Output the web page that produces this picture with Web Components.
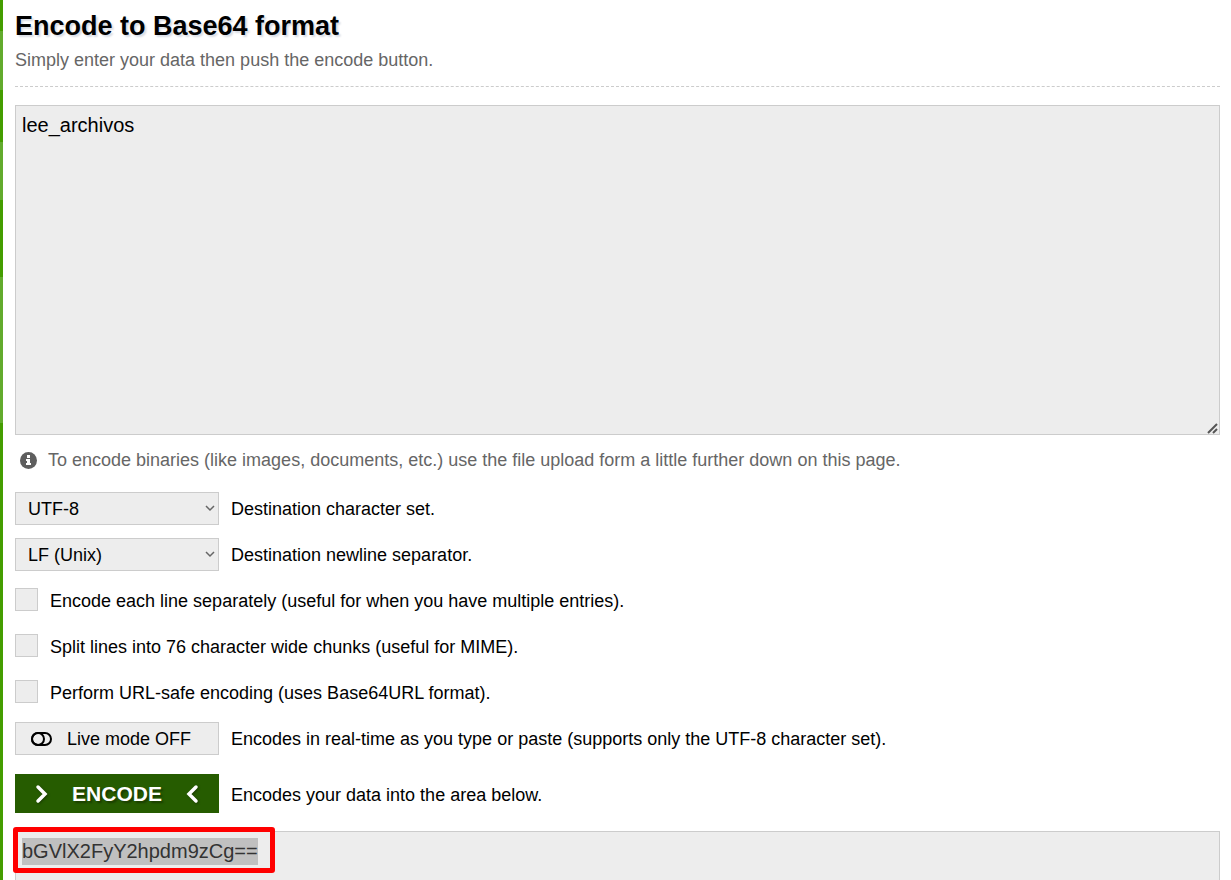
<!DOCTYPE html>
<html lang="en">
<head>
<meta charset="utf-8">
<title>Base64 Encode</title>
<style>
  html, body { margin: 0; height: 100%; }
  body {
    background: #fff;
    color: #000;
    font: 18px/24px "Liberation Sans", Arial, sans-serif;
    overflow: hidden;
  }
</style>
</head>
<body>
<page-shell>
  <page-heading>
    <span slot="title">Encode to Base64 format</span>
    <span slot="lead">Simply enter your data then push the encode button.</span>
  </page-heading>
  <source-box value="lee_archivos" label="Data to encode"></source-box>
  <info-note>To encode binaries (like images, documents, etc.) use the file upload form a little further down on this page.</info-note>
  <option-list>
    <select-row options="UTF-8|ASCII|ISO-8859-1|UTF-16">Destination character set.</select-row>
    <select-row options="LF (Unix)|CRLF (Windows)">Destination newline separator.</select-row>
    <check-row>Encode each line separately (useful for when you have multiple entries).</check-row>
    <check-row>Split lines into 76 character wide chunks (useful for MIME).</check-row>
    <check-row>Perform URL-safe encoding (uses Base64URL format).</check-row>
    <live-row>Encodes in real-time as you type or paste (supports only the UTF-8 character set).</live-row>
    <encode-row>Encodes your data into the area below.</encode-row>
  </option-list>
  <result-box value="bGVlX2FyY2hpdm9zCg==" label="Encoded result"></result-box>
</page-shell>

<script>
  const define = (name, html, setup) => {
    const template = document.createElement('template');
    template.innerHTML = html;
    customElements.define(name, class extends HTMLElement {
      constructor() {
        super();
        this.attachShadow({ mode: 'open' }).append(template.content.cloneNode(true));
      }
      connectedCallback() {
        if (setup) setup(this, this.shadowRoot);
      }
    });
  };

  define('page-shell', `
    <style>
      :host { display: grid; grid-template-columns: 3px minmax(0, 1fr); min-height: 100vh; }
      .edge {
        background: linear-gradient(#449d00 31px, #62ab2d 31px 90px, #449d00 90px 142px,
          #62ab2d 142px 200px, #449d00 200px 277px, #62ab2d 277px 423px, #449d00 423px);
      }
      main { padding: 8px 11px 0 12px; }
    </style>
    <div class="edge"></div>
    <main><slot></slot></main>`);

  define('page-heading', `
    <style>
      :host { display: block; border-bottom: 1px dashed #ccc; padding-bottom: 14px; margin-bottom: 18px; }
      h1 { margin: 0 0 4px; font-size: 27px; line-height: 36px; text-shadow: 2px 2px 2px #d8dce4; }
      p { margin: 0; color: #666; }
    </style>
    <h1><slot name="title"></slot></h1>
    <p><slot name="lead"></slot></p>`);

  const field = `
      textarea {
        display: block; box-sizing: border-box; width: 100%; height: 330px; margin: 0;
        padding: 6px; border: 1px solid #ccc; border-radius: 0; outline: none;
        background: #ededed; color: #000; font: 20px/27px "Liberation Sans", Arial, sans-serif;
      }`;
  const fillField = (host, root) => {
    const area = root.querySelector('textarea');
    area.value = host.getAttribute('value');
    area.setAttribute('aria-label', host.getAttribute('label'));
    return area;
  };

  define('source-box', `
    <style>
      :host { display: block; position: relative; }
      ${field}
      textarea { resize: none; }
      svg { position: absolute; right: 2px; bottom: 1px; pointer-events: none; }
    </style>
    <textarea spellcheck="false"></textarea>
    <svg width="11" height="11" fill="none" stroke="#555" stroke-width="2"><path d="M1 10 10 1M6 10l4-4"/></svg>`,
    fillField);

  define('info-note', `
    <style>
      :host { display: flex; align-items: center; gap: 11px; margin: 13px 0 20px; padding-left: 5px; color: #666; }
      svg { flex: none; }
    </style>
    <svg width="17" height="17" viewBox="0 0 17 17"><circle cx="8.500" cy="8.500" r="8.500" fill="#5e5e5e"/>
      <path fill="#fff" d="M7 3h3v3H7zM6 7h4v4h1v2H6v-2h1V9H6z"/></svg>
    <span><slot></slot></span>`);

  define('option-list', `
    <style>:host { display: flex; flex-direction: column; gap: 13px; margin-bottom: 18px; }</style>
    <slot></slot>`);

  const row = `
      :host { display: flex; align-items: center; gap: 12px; min-height: 33px; }
      select, button {
        box-sizing: border-box; flex: none; width: 204px; height: 33px; margin: 0;
        border: 1px solid #ccc; border-radius: 0; background: #ededed; color: #000;
        font: 18px/24px "Liberation Sans", Arial, sans-serif;
      }`;

  define('select-row', `
    <style>
      ${row}
      .pick { position: relative; display: flex; }
      select { appearance: none; padding: 0 24px 0 12px; }
      svg { position: absolute; right: 4px; top: 13px; pointer-events: none; }
    </style>
    <span class="pick"><select id="pick"></select>
      <svg width="10" height="7" fill="none" stroke="#666" stroke-width="1.500"><path d="M1 1l4 4 4-4"/></svg></span>
    <label for="pick"><slot></slot></label>`,
    (host, root) => {
      root.querySelector('select').append(...host.getAttribute('options').split('|').map(t => new Option(t)));
    });

  define('check-row', `
    <style>
      ${row}
      input { appearance: none; flex: none; box-sizing: border-box; width: 23px; height: 23px;
        margin: 0 0 2px; border: 1px solid #ccc; background: #ededed; }
      input:checked { background: #449d00; }
    </style>
    <input type="checkbox" id="check"><label for="check"><slot></slot></label>`);

  define('live-row', `
    <style>
      ${row}
      button { display: flex; align-items: center; gap: 15px; padding: 0 15px; }
    </style>
    <button type="button">
      <svg width="21" height="14" viewBox="0 0 21 14" fill="none" stroke="#000" stroke-width="2">
        <rect x="1" y="1" width="19" height="12" rx="6"/><circle cx="7" cy="7" r="6"/></svg>
      <span>Live mode OFF</span>
    </button>
    <span><slot></slot></span>`);

  define('encode-row', `
    <style>
      ${row}
      :host { margin-top: 6px; }
      button { display: flex; align-items: center; justify-content: space-between; height: 39px;
        padding: 0 20px; border: 0; background: #265c00; color: #fff; font-size: 21px; font-weight: bold;
        text-shadow: 2px 2px 2px #1a3d00; }
      svg { filter: drop-shadow(1px 1px 1px #1a3d00); }
      .text { padding-top: 2px; }
    </style>
    <button type="button">
      <svg width="13" height="20" fill="none" stroke="#fff" stroke-width="3.500" stroke-linecap="round"><path d="M3 3l7 7-7 7"/></svg>
      <span>ENCODE</span>
      <svg width="13" height="20" fill="none" stroke="#fff" stroke-width="3.500" stroke-linecap="round"><path d="M10 3l-7 7 7 7"/></svg>
    </button>
    <span class="text"><slot></slot></span>`);

  define('result-box', `
    <style>
      :host { display: block; position: relative; }
      ${field}
      textarea { resize: none; color: #333; }
      textarea::selection { background: #c0c0c0; color: #333; }
      .frame { position: absolute; left: -2px; top: -4px; box-sizing: border-box; width: 262px; height: 46px;
        border: 5px solid #f00; border-radius: 3px; pointer-events: none; }
    </style>
    <textarea readonly spellcheck="false"></textarea>
    <div class="frame"></div>`,
    (host, root) => {
      const area = fillField(host, root);
      area.focus({ preventScroll: true });
      area.select();
    });
</script>
</body>
</html>
